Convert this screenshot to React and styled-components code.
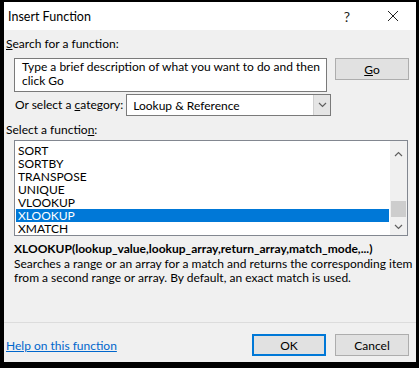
import React from "react";
import styled, { createGlobalStyle } from "styled-components";

const Global = createGlobalStyle`
  html, body { margin: 0; padding: 0; background: #000; }
  body { font-family: Lato, "Noto Sans", sans-serif; font-size: 12px; color: #000; }
`;

const Dialog = styled.div`
  width: 412px;
  height: 360px;
  margin: 2px 3px 6px 4px;
  background: #f0f0f0;
  display: flex;
  flex-direction: column;
  overflow: hidden;
`;

const TitleBar = styled.div`
  height: 28px;
  background: #fff;
  display: flex;
  align-items: center;
  padding-left: 4px;
  flex-shrink: 0;
`;

const Title = styled.div`
  flex: 1;
  font-size: 12.5px;
`;

const TitleBtn = styled.div`
  width: ${(p) => p.$w}px;
  display: flex;
  align-items: center;
  justify-content: center;
  font-size: 14px;
  color: #222;
`;

const Body = styled.div`
  flex: 1;
  display: flex;
  flex-direction: column;
  padding: 0 7px 0 2px;
`;

const Label = styled.div`
  margin-top: ${(p) => p.$mt || 0}px;
  margin-right: ${(p) => p.$mr || 0}px;
  line-height: 16px;
  white-space: nowrap;
  flex-shrink: 0;
`;

const U = styled.span`
  text-decoration: underline;
  text-underline-offset: 1px;
`;

const Row = styled.div`
  display: flex;
  align-items: ${(p) => p.$align || "flex-start"};
  margin-top: ${(p) => p.$mt || 0}px;
  margin-left: ${(p) => p.$ml || 0}px;
`;

const SearchBox = styled.div`
  width: 304px;
  height: 31px;
  border: 1px solid #7a7a7a;
  background: #fff;
  padding: 1px 0 0 7px;
  line-height: 14px;
`;

const Button = styled.div`
  width: 72px;
  height: 20px;
  border: 1px solid ${(p) => (p.$default ? "#0078d7" : "#adadad")};
  box-shadow: ${(p) => (p.$default ? "inset 0 0 0 1px #0078d7" : "none")};
  background: #e1e1e1;
  display: flex;
  align-items: center;
  justify-content: center;
  margin-left: ${(p) => p.$ml || 0}px;
  flex-shrink: 0;
`;

const Select = styled.div`
  flex: 0 0 203px;
  height: 20px;
  border: 1px solid #7a7a7a;
  background: #fff;
  display: flex;
  align-items: center;
`;

const SelectText = styled.div`
  flex: 1;
  padding-left: 6px;
`;

const DropBtn = styled.div`
  width: 16px;
  height: 20px;
  background: #e5e5e5;
  border-left: 1px solid #cfcfcf;
  display: flex;
  align-items: center;
  justify-content: center;
`;

const ListBox = styled.div`
  margin: 2px 0 0 8px;
  width: 392px;
  height: 94px;
  border: 1px solid #828790;
  background: #fff;
  display: flex;
  overflow: hidden;
`;

const Items = styled.div`
  flex: 1;
  padding: 3px 1px 0 1px;
`;

const Item = styled.div`
  height: 13px;
  line-height: 13px;
  padding-left: 2px;
  background: ${(p) => (p.$sel ? "#0078d7" : "transparent")};
  color: ${(p) => (p.$sel ? "#fff" : "#000")};
`;

const ScrollBar = styled.div`
  width: 17px;
  display: flex;
  flex-direction: column;
  align-items: center;
  background: #f0f0f0;
`;

const Arrow = styled.div`
  height: 17px;
  display: flex;
  align-items: center;
  justify-content: center;
  margin-top: ${(p) => p.$mt || 0}px;
`;

const Thumb = styled.div`
  width: 15px;
  height: 17px;
  background: #cdcdcd;
  margin-top: ${(p) => p.$mt}px;
`;

const Signature = styled.div`
  font-weight: bold;
  margin: 5px 0 0 8px;
  line-height: 16px;
`;

const Desc = styled.div`
  margin: 0 0 0 8px;
  line-height: 14px;
  width: 400px;
`;

const Spacer = styled.div`
  flex: 1;
`;

const Separator = styled.div`
  height: 1px;
  background: #dcdcdc;
  margin: 0 -7px 0 -2px;
`;

const Footer = styled.div`
  display: flex;
  align-items: center;
  padding: 11px 0 6px;
`;

const Link = styled.a`
  color: #0066cc;
  text-decoration: underline;
  flex: 1;
  cursor: pointer;
`;

const Chevron = ({ up }) => (
  <svg width="9" height="6" viewBox="0 0 9 6">
    <path
      d={up ? "M1 5 L4.5 1.5 L8 5" : "M1 1 L4.5 4.5 L8 1"}
      stroke="#606060"
      strokeWidth="1.2"
      fill="none"
    />
  </svg>
);

export default function App() {
  const items = ["SORT", "SORTBY", "TRANSPOSE", "UNIQUE", "VLOOKUP", "XLOOKUP", "XMATCH"];
  return (
    <>
      <Global />
      <Dialog>
        <TitleBar>
          <Title>Insert Function</Title>
          <TitleBtn $w={46}>?</TitleBtn>
          <TitleBtn $w={46}>
            <svg width="12" height="12" viewBox="0 0 12 12">
              <path d="M1 1 L11 11 M11 1 L1 11" stroke="#222" strokeWidth="1" />
            </svg>
          </TitleBtn>
        </TitleBar>
        <Body>
          <Label $mt={6}>
            <U>S</U>earch for a function:
          </Label>
          <Row $mt={6} $ml={8}>
            <SearchBox>
              Type a brief description of what you want to do and then click Go
            </SearchBox>
            <Button $ml={8}>
              <span>
                <U>G</U>o
              </span>
            </Button>
          </Row>
          <Row $mt={2} $ml={9} $align="center">
            <Label $mr={3}>
              Or select a <U>c</U>ategory:
            </Label>
            <Select>
              <SelectText>Lookup &amp; Reference</SelectText>
              <DropBtn>
                <Chevron />
              </DropBtn>
            </Select>
          </Row>
          <Label $mt={6}>
            Select a functio<U>n</U>:
          </Label>
          <ListBox>
            <Items>
              {items.map((it) => (
                <Item key={it} $sel={it === "XLOOKUP"}>
                  {it}
                </Item>
              ))}
            </Items>
            <ScrollBar>
              <Arrow $mt={5}>
                <Chevron up />
              </Arrow>
              <Thumb $mt={38} />
              <Arrow $mt={1}>
                <Chevron />
              </Arrow>
            </ScrollBar>
          </ListBox>
          <Signature>XLOOKUP(lookup_value,lookup_array,return_array,match_mode,...)</Signature>
          <Desc>
            Searches a range or an array for a match and returns the corresponding item
            from a second range or array. By default, an exact match is used.
          </Desc>
          <Spacer />
          <Separator />
          <Footer>
            <Link>Help on this function</Link>
            <Button $default>OK</Button>
            <Button $ml={9}>Cancel</Button>
          </Footer>
        </Body>
      </Dialog>
    </>
  );
}
